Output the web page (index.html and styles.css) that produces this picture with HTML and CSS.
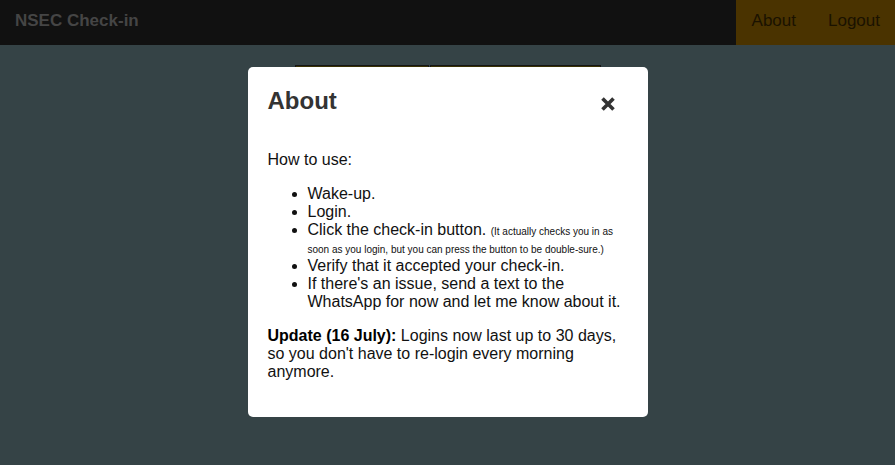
FILE: index.html
```html
<!DOCTYPE html>
<html lang="en">
<head>
<meta charset="utf-8">
<title>NSEC Check-in</title>
<link rel="stylesheet" href="styles.css">
</head>
<body>
<nav class="navbar">
  <div class="brand">NSEC Check-in</div>
  <div class="nav-links">
    <a class="nav-link">About</a>
    <a class="nav-link">Logout</a>
  </div>
</nav>
<main class="page">
  <div class="tabs">
    <div class="tab tab-a"></div>
    <div class="tab tab-b"></div>
  </div>
</main>
<div class="modal">
  <div class="modal-card">
    <div class="modal-head">
      <h2 class="modal-title">About</h2>
      <button class="close" aria-label="Close">
        <svg width="16" height="16" viewBox="0 0 16 16"><path d="M2.5 2.5 L13.5 13.5 M13.5 2.5 L2.5 13.5" stroke="#333" stroke-width="3.6" stroke-linecap="butt"/></svg>
      </button>
    </div>
    <p class="text">How to use:</p>
    <ul class="steps">
      <li>Wake-up.</li>
      <li>Login.</li>
      <li>Click the check-in button. <span class="note">(It actually checks you in as soon as you login, but you can press the button to be double-sure.)</span></li>
      <li>Verify that it accepted your check-in.</li>
      <li>If there's an issue, send a text to the WhatsApp for now and let me know about it.</li>
    </ul>
    <p class="text"><strong>Update (16 July):</strong> Logins now last up to 30 days, so you don't have to re-login every morning anymore.</p>
  </div>
</div>
</body>
</html>
```
FILE: styles.css
```css
html, body {
  margin: 0;
  padding: 0;
  height: 100%;
}
body {
  background: #354346;
  font-family: "Liberation Sans", Arial, sans-serif;
  overflow: hidden;
}
.navbar {
  height: 45px;
  background: #111111;
  display: flex;
  justify-content: space-between;
  align-items: stretch;
}
.brand {
  color: #454545;
  font-weight: bold;
  font-size: 17px;
  padding: 0 0 4px 15px;
  display: flex;
  align-items: center;
}
.nav-links {
  display: flex;
  background: #4a3300;
}
.nav-link {
  color: #1a1200;
  font-size: 17px;
  padding: 0 15px 4px 16px;
  display: flex;
  align-items: center;
}
.nav-link + .nav-link {
  padding-left: 17px;
}
.page {
  display: flex;
  justify-content: center;
  padding-top: 20px;
}
.tabs {
  display: flex;
  gap: 1px;
}
.tab {
  height: 60px;
  background: #3a3204;
  border: 1px solid #151515;
}
.tab-a { width: 132px; }
.tab-b { width: 169px; }
.modal {
  position: absolute;
  inset: 0;
  display: flex;
  justify-content: center;
  align-items: flex-start;
  padding-top: 67px;
}
.modal-card {
  width: 360px;
  padding: 20px;
  background: #ffffff;
  border-radius: 5px;
  color: #111;
  font-size: 16px;
  height: 310px;
}
.modal-head {
  display: flex;
  justify-content: space-between;
  align-items: flex-start;
  margin-bottom: 36px;
}
.modal-title {
  margin: 0;
  font-size: 24px;
  font-weight: bold;
  color: #333;
}
.close {
  border: 0;
  background: none;
  padding: 0;
  margin: 9px 12px 0 0;
  width: 16px;
  height: 16px;
  display: block;
}
.close svg { display: block; }
.text {
  margin: 16px 0;
}
.steps {
  margin: 16px 0;
  padding-left: 40px;
}
.note {
  font-size: 10px;
}
strong { color: #000; }
```
